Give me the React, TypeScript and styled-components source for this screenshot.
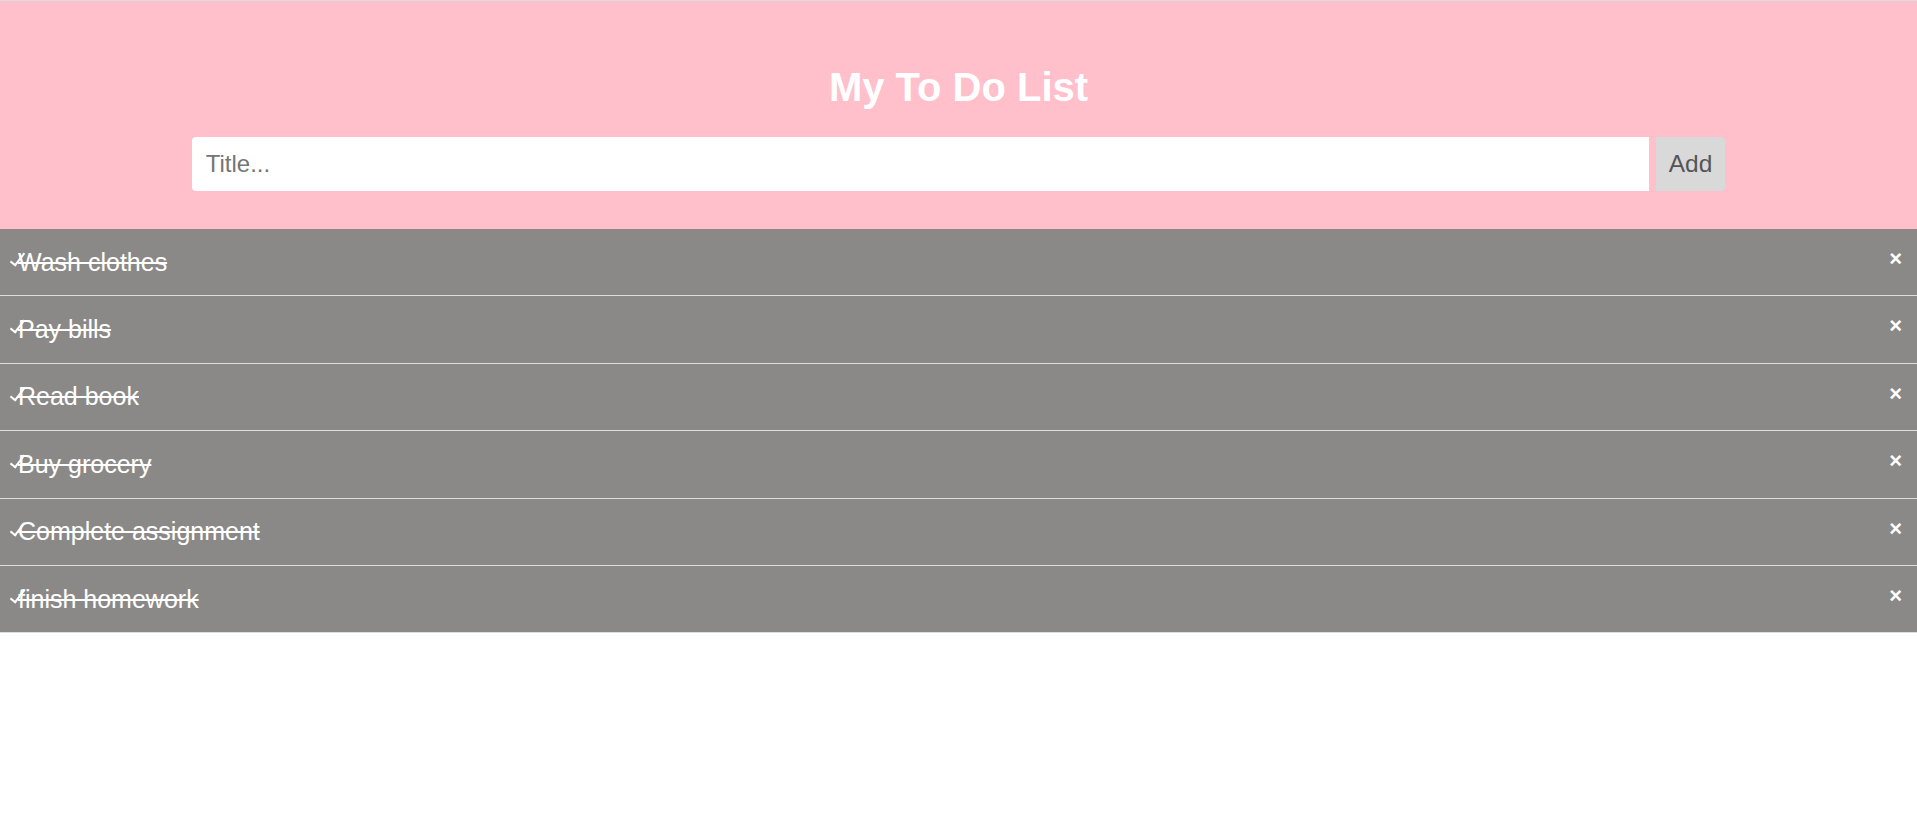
import React, { useState } from "react";
import styled, { createGlobalStyle } from "styled-components";

const GlobalStyle = createGlobalStyle`
  html, body { margin: 0; padding: 0; background: #fff; }
  body { font-family: "Liberation Sans", Arial, sans-serif; }
  * { box-sizing: border-box; }
`;

const Page = styled.div`
  border-top: 1px solid #dcdcdc;
`;

const Header = styled.header`
  background: #ffc0cb;
  padding: 63px 0 38px;
  display: flex;
  flex-direction: column;
  align-items: center;
`;

const Title = styled.h1`
  margin: 0 0 27px;
  color: #fff;
  font-size: 40px;
  font-weight: 700;
  line-height: 46px;
`;

const Form = styled.div`
  width: 80%;
  display: flex;
  gap: 7px;
`;

const TitleInput = styled.input`
  flex: 1;
  height: 54px;
  border: none;
  outline: none;
  border-radius: 4px 0 0 4px;
  padding: 0 14px;
  font-family: "Liberation Sans", Arial, sans-serif;
  font-size: 24px;
  color: #333;
  background: #fff;
  &::placeholder { color: #757575; }
`;

const AddButton = styled.button`
  height: 54px;
  border: none;
  border-radius: 0 4px 4px 0;
  background: #d9d9d9;
  color: #555;
  padding: 0 13px;
  font-family: "Liberation Sans", Arial, sans-serif;
  font-size: 24.5px;
  cursor: pointer;
`;

const List = styled.ul`
  list-style: none;
  margin: 0;
  padding: 0;
`;

const Item = styled.li<{ $checked: boolean }>`
  position: relative;
  height: 67.4px;
  display: flex;
  align-items: center;
  justify-content: space-between;
  padding: 0 0 0 18px;
  background: ${(p) => (p.$checked ? "#8a8987" : "#eee")};
  color: ${(p) => (p.$checked ? "#fff" : "#333")};
  border-bottom: 1px solid #dedede;
  font-size: 25px;
  cursor: pointer;

  &::before {
    content: "";
    display: ${(p) => (p.$checked ? "block" : "none")};
    position: absolute;
    left: 14px;
    top: 21px;
    width: 5px;
    height: 14px;
    border: solid #fff;
    border-width: 0 2px 2px 0;
    transform: rotate(38deg);
  }
`;

const ItemText = styled.span<{ $checked: boolean }>`
  text-decoration: ${(p) => (p.$checked ? "line-through" : "none")};
  text-decoration-thickness: 1.5px;
`;

const Close = styled.span`
  align-self: flex-start;
  padding: 19px 15px 0 0;
  color: #fff;
  font-size: 22px;
  font-weight: 700;
  line-height: 1;
`;

const initial = [
  "Wash clothes",
  "Pay bills",
  "Read book",
  "Buy grocery",
  "Complete assignment",
  "finish homework",
];

export default function App() {
  const [items, setItems] = useState(initial.map((t) => ({ t, c: true })));
  const [val, setVal] = useState("");
  return (
    <>
      <GlobalStyle />
      <Page>
        <Header>
          <Title>My To Do List</Title>
          <Form>
            <TitleInput
              placeholder="Title..."
              value={val}
              onChange={(e) => setVal(e.target.value)}
            />
            <AddButton
              onClick={() => {
                if (val.trim()) {
                  setItems([...items, { t: val, c: false }]);
                  setVal("");
                }
              }}
            >
              Add
            </AddButton>
          </Form>
        </Header>
        <List>
          {items.map((it, i) => (
            <Item
              key={i}
              $checked={it.c}
              onClick={() =>
                setItems(items.map((x, j) => (j === i ? { ...x, c: !x.c } : x)))
              }
            >
              <ItemText $checked={it.c}>{it.t}</ItemText>
              <Close
                onClick={(e) => {
                  e.stopPropagation();
                  setItems(items.filter((_, j) => j !== i));
                }}
              >
                ×
              </Close>
            </Item>
          ))}
        </List>
      </Page>
    </>
  );
}
